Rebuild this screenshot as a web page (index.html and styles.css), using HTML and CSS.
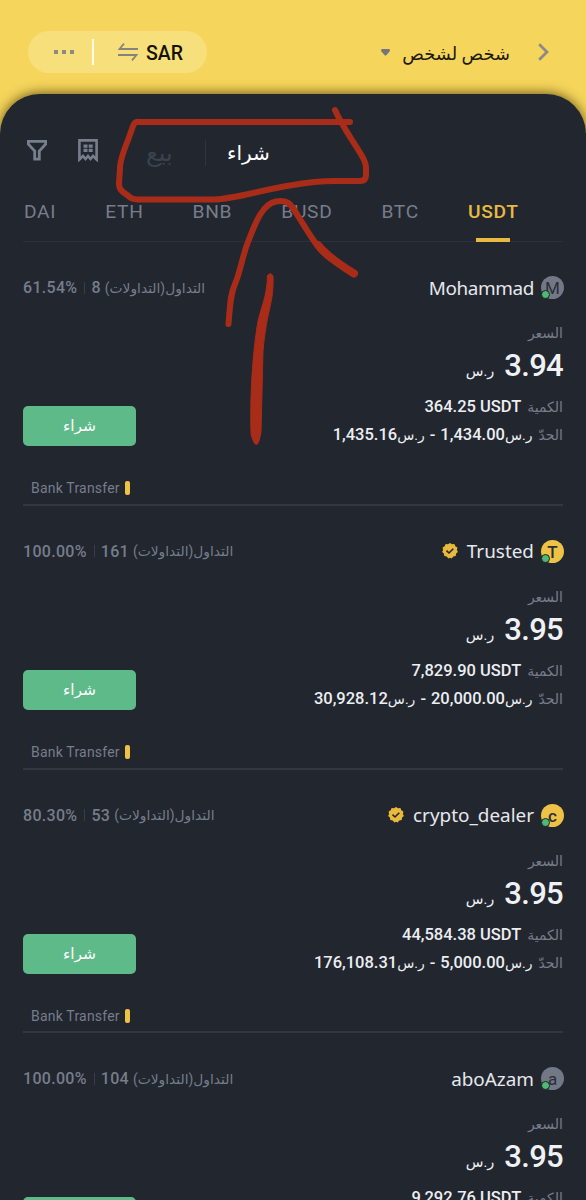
FILE: index.html
```html
<!DOCTYPE html>
<html lang="ar">
<head>
    <meta charset="UTF-8">
    <meta name="viewport" content="width=device-width, initial-scale=1.0">
    <title>شخص لشخص</title>
    <link rel="stylesheet" href="styles.css">
</head>
<body>
    <header class="topbar">
        <div class="pill">
            <svg class="dots" width="20" height="4" viewBox="0 0 20 4"><path d="M0 0h4v4H0zM8 0h4v4H8zM16 0h4v4h-4z" fill="#8d8a80"/></svg>
            <span class="pill-line"></span>
            <svg class="swap" width="20" height="18" viewBox="0 0 20 18" fill="none" stroke="#85837b" stroke-width="1.8"><path d="M20 6H1.500L6 .7M0 12h18.500L14 17.300"/></svg>
            <span class="currency">SAR</span>
        </div>
        <div class="title">
            <svg width="9" height="7" viewBox="0 0 9 7"><path d="M1 0h7q1 0 1 2L5.500 6q-1 1-2 0L0 2q0-2 1-2z" fill="#77737c"/></svg>
            <span class="title-text" dir="rtl">شخص لشخص</span>
            <svg class="chevron" width="11" height="18" viewBox="0 0 11 18" fill="none" stroke="#8d8a85" stroke-width="2.8"><path d="M1.200 1.200L9 9l-7.800 7.800"/></svg>
        </div>
    </header>

    <main class="panel">
        <div class="tools">
            <svg class="filter" width="20" height="21" viewBox="0 0 20 21" fill="none" stroke="#777e8c" stroke-width="2.8"><path d="M1.400 1.400h17.200v2.800L12.300 11v8.100H7.700V11L1.400 4.200z"/></svg>
            <svg class="receipt" width="20" height="23" viewBox="0 0 20 23"><path d="M1.400 20.500V1.400h17.200v19.100L15 17l-2.500 3L10 17l-2.500 3L5 17z" fill="none" stroke="#777e8c" stroke-width="2.6"/><path d="M5.500 5.500h4v3.200h-4zM10.700 5.500h4v3.200h-4zM5.500 9.800h4V13h-4zM10.700 9.800h4V13h-4z" fill="#777e8c"/></svg>
            <span class="side sell">بيع</span>
            <span class="side-line"></span>
            <span class="side buy">شراء</span>
        </div>

        <nav class="tabs">
            <span class="tab">DAI</span>
            <span class="tab">ETH</span>
            <span class="tab">BNB</span>
            <span class="tab">BUSD</span>
            <span class="tab">BTC</span>
            <span class="tab active">USDT</span>
        </nav>

        <section class="offer">
            <div class="offer-head">
                <div class="stats">
                    <span>61.54%</span>
                    <i class="stats-line"></i>
                    <span>8</span>
                    <span class="stats-label" dir="rtl">التداول(التداولات)</span>
                </div>
                <div class="seller">
                    <span class="name wide">Mohammad</span>
                    <span class="avatar">M</span>
                </div>
            </div>
            <div class="label" dir="rtl">السعر</div>
            <div class="price" dir="rtl"><b>3.94</b><span>ر.س</span></div>
            <div class="offer-body">
                <button class="buy-button">شراء</button>
                <div class="details">
                    <div class="line" dir="rtl"><span class="key">الكمية</span><b dir="ltr">364.25 USDT</b></div>
                    <div class="line" dir="rtl"><span class="key">الحدّ</span><span class="range"><i>ر.س</i><b>1,434.00</b><b class="dash">-</b><i>ر.س</i><b>1,435.16</b></span></div>
                </div>
            </div>
            <div class="payment"><span>Bank Transfer</span><i></i></div>
        </section>

        <section class="offer">
            <div class="offer-head">
                <div class="stats">
                    <span>100.00%</span>
                    <i class="stats-line"></i>
                    <span>161</span>
                    <span class="stats-label" dir="rtl">التداول(التداولات)</span>
                </div>
                <div class="seller">
                    <svg class="badge" width="16" height="16" viewBox="0 0 16 16"><path d="M8 0l2 1.300 2.400-.2.9 2.200 2.100 1.200-.5 2.400 1 2.100-1.800 1.600-.4 2.400-2.400.4L9.600 15.400 8 14.700 6.400 15.400 4.700 13.400 2.300 13 1.900 10.600.1 9l1-2.100L.6 4.500l2.100-1.200.9-2.200 2.400.2z" fill="#e9b93c"/><path d="M4.500 7.600L7 10l4.300-4.300" fill="none" stroke="#22262f" stroke-width="1.600"/></svg>
                    <span class="name">Trusted</span>
                    <span class="avatar gold">T</span>
                </div>
            </div>
            <div class="label" dir="rtl">السعر</div>
            <div class="price" dir="rtl"><b>3.95</b><span>ر.س</span></div>
            <div class="offer-body">
                <button class="buy-button">شراء</button>
                <div class="details">
                    <div class="line" dir="rtl"><span class="key">الكمية</span><b dir="ltr">7,829.90 USDT</b></div>
                    <div class="line" dir="rtl"><span class="key">الحدّ</span><span class="range"><i>ر.س</i><b>20,000.00</b><b class="dash">-</b><i>ر.س</i><b>30,928.12</b></span></div>
                </div>
            </div>
            <div class="payment"><span>Bank Transfer</span><i></i></div>
        </section>

        <section class="offer">
            <div class="offer-head">
                <div class="stats">
                    <span>80.30%</span>
                    <i class="stats-line"></i>
                    <span>53</span>
                    <span class="stats-label" dir="rtl">التداول(التداولات)</span>
                </div>
                <div class="seller">
                    <svg class="badge" width="16" height="16" viewBox="0 0 16 16"><path d="M8 0l2 1.300 2.400-.2.9 2.200 2.100 1.200-.5 2.400 1 2.100-1.800 1.600-.4 2.400-2.400.4L9.600 15.400 8 14.700 6.400 15.400 4.700 13.400 2.300 13 1.900 10.600.1 9l1-2.100L.6 4.500l2.100-1.200.9-2.200 2.400.2z" fill="#e9b93c"/><path d="M4.500 7.600L7 10l4.300-4.300" fill="none" stroke="#22262f" stroke-width="1.600"/></svg>
                    <span class="name">crypto_dealer</span>
                    <span class="avatar gold">c</span>
                </div>
            </div>
            <div class="label" dir="rtl">السعر</div>
            <div class="price" dir="rtl"><b>3.95</b><span>ر.س</span></div>
            <div class="offer-body">
                <button class="buy-button">شراء</button>
                <div class="details">
                    <div class="line" dir="rtl"><span class="key">الكمية</span><b dir="ltr">44,584.38 USDT</b></div>
                    <div class="line" dir="rtl"><span class="key">الحدّ</span><span class="range"><i>ر.س</i><b>5,000.00</b><b class="dash">-</b><i>ر.س</i><b>176,108.31</b></span></div>
                </div>
            </div>
            <div class="payment"><span>Bank Transfer</span><i></i></div>
        </section>

        <section class="offer">
            <div class="offer-head">
                <div class="stats">
                    <span>100.00%</span>
                    <i class="stats-line"></i>
                    <span>104</span>
                    <span class="stats-label" dir="rtl">التداول(التداولات)</span>
                </div>
                <div class="seller">
                    <span class="name">aboAzam</span>
                    <span class="avatar">a</span>
                </div>
            </div>
            <div class="label" dir="rtl">السعر</div>
            <div class="price" dir="rtl"><b>3.95</b><span>ر.س</span></div>
            <div class="offer-body">
                <button class="buy-button"></button>
                <div class="details">
                    <div class="line" dir="rtl"><span class="key">الكمية</span><b dir="ltr">9,292.76 USDT</b></div>
                </div>
            </div>
        </section>
    </main>

    <!-- hand-drawn marker over the buy / sell switch -->
    <svg class="marker" width="586" height="460" viewBox="0 0 586 460" fill="none" stroke="#a92c18" stroke-width="6" stroke-linecap="round" stroke-linejoin="round">
        <path d="M350 122H139Q135 121 133 126L128 140Q120 160 120 168L119 184Q119 189 123 192L131 198Q134 199.500 138 199.500H214C235 199 260 190 293 185Q315 181 335 181H360Q366 181 366 175V168Q366 163 362 156C350 136 342 126 335 110"/>
        <path d="M228.500 324C230 307 230 295 235 284C241 270 242 257 248 242C255 224 262 204 276 201.500C289 199 292 206 298 216C310 235 318 250 331 259"/>
        <path d="M318 245C327 256 340 265 354 273.500" stroke-width="8"/>
        <path d="M267.500 276Q270 271 273 276C274 304 267 307 263 351L261 432Q257 456 251 434C250 400 252 360 257 327C260 308 267 299 267.500 276z" fill="#a92c18" stroke-width="1"/>
    </svg>
</body>
</html>
```
FILE: styles.css
```css
* {
    box-sizing: border-box;
}
body {
    margin: 0;
    height: 1200px;
    overflow: hidden;
    position: relative;
    background-color: #f5d55b;
    font-family: Roboto, "DejaVu Sans", sans-serif;
    white-space: nowrap;
}
i {
    font-style: normal;
}
b {
    font-weight: 500;
}
svg {
    flex: none;
}

/* top bar */
.topbar {
    height: 94px;
    padding: 31px 37px 0 28px;
    display: flex;
    justify-content: space-between;
    align-items: flex-start;
}
.pill {
    display: flex;
    align-items: center;
    width: 179px;
    height: 42px;
    padding-left: 26px;
    border-radius: 21px;
    background-color: #f7e07b;
}
.pill-line {
    width: 2px;
    height: 26px;
    margin: 0 24px 0 18px;
    background-color: #fffbe8;
}
.currency {
    margin: 2px 0 0 8px;
    color: #14120a;
    font-size: 19.5px;
    font-weight: 500;
}
.title {
    display: flex;
    align-items: center;
    height: 42px;
}
.title-text {
    width: 108px;
    margin: 2px 0 0 12px;
    font-size: 17.9px;
    color: #1c1a12;
}
.chevron {
    margin-left: 28px;
}

/* dark sheet */
.panel {
    height: 1106px;
    padding: 0 23px;
    overflow: hidden;
    border-radius: 40px 40px 0 0;
    background-color: #22262f;
    box-shadow: 0 -1px 12px rgba(60, 45, 0, 0.75);
}
.tools {
    display: flex;
    align-items: center;
    height: 96px;
    padding: 16px 0 0 4px;
}
.receipt {
    margin-left: 31px;
}
.side {
    margin-top: 5px;
    font-size: 20px;
}
.sell {
    width: 28px;
    margin-left: 48px;
    font-size: 24px;
    color: #3c424d;
}
.side-line {
    width: 1px;
    height: 26px;
    margin: 6px 21px 0 31px;
    background-color: #2f343e;
}
.buy {
    color: #fff;
}
.tabs {
    display: flex;
    gap: 49px;
    height: 52px;
    padding: 10px 0 0 1px;
    border-bottom: 1px solid #2b3039;
    font-size: 19.2px;
    letter-spacing: 0.7px;
    line-height: 24px;
    color: #767d8b;
}
.tab.active {
    position: relative;
    color: #e8ba41;
    font-weight: 500;
}
.tab.active::after {
    content: "";
    position: absolute;
    left: 8px;
    top: 38px;
    width: 34px;
    height: 4px;
    background-color: #e8ba41;
}

/* offers */
.offer {
    height: 263.75px;
    padding-top: 33px;
    border-bottom: 2px solid #323740;
}
.offer-head {
    display: flex;
    justify-content: space-between;
    align-items: center;
    height: 25px;
    margin-right: -1px;
}
.stats {
    display: flex;
    align-items: center;
    font-size: 16px;
    font-weight: 500;
    letter-spacing: 0.3px;
    color: #767d8b;
}
.stats-line {
    width: 1px;
    height: 12px;
    margin: 0 6px 0 7px;
    background-color: #383d48;
}
.stats-label {
    margin-left: 4px;
    font-size: 13.8px;
    font-weight: 400;
    letter-spacing: 0;
}
.seller {
    display: flex;
    align-items: center;
}
.name {
    margin-right: 7px;
    font-family: "Noto Sans", sans-serif;
    font-size: 18.9px;
    color: #e6e8ed;
}
.name.wide {
    letter-spacing: -0.4px;
}
.badge {
    margin-right: 9px;
}
.avatar {
    position: relative;
    width: 23px;
    height: 23px;
    border-radius: 50%;
    background-color: #737887;
    color: #2a2e38;
    font-size: 17px;
    line-height: 24px;
    text-align: center;
}
.avatar.gold {
    background-color: #edc245;
    font-weight: 500;
}
.avatar::after {
    content: "";
    position: absolute;
    left: 0;
    bottom: 0;
    width: 7px;
    height: 7px;
    border: 1.5px solid #17271f;
    border-radius: 50%;
    background-color: #4fb879;
}
.label {
    height: 22px;
    margin-top: 22px;
    font-size: 14px;
    line-height: 22px;
    color: #767d8b;
}
.price {
    display: flex;
    align-items: baseline;
    height: 38px;
    line-height: 44px;
    color: #f0f1f5;
}
.price b {
    font-size: 31px;
    letter-spacing: -0.7px;
}
.price span {
    margin-right: 10px;
    font-size: 14.5px;
}
.offer-body {
    display: flex;
    justify-content: space-between;
    height: 70px;
    margin-top: 11px;
}
.buy-button {
    width: 113px;
    height: 40px;
    margin-top: 13px;
    border: none;
    border-radius: 5px;
    background-color: #5fba89;
    color: #fff;
    font-family: "DejaVu Sans", sans-serif;
    font-size: 15.5px;
}
.line {
    display: flex;
    align-items: baseline;
    height: 28px;
    line-height: 28px;
    font-size: 16.5px;
    color: #eceef2;
}
.key {
    margin-left: 6px;
    font-size: 14px;
    color: #767d8b;
}
.range {
    display: flex;
    align-items: baseline;
}
.range i {
    font-size: 14px;
}
.dash {
    margin: 0 5px;
}
.payment {
    display: flex;
    align-items: center;
    height: 20px;
    margin-top: 15px;
    padding-left: 8px;
    font-size: 14px;
    letter-spacing: 0.2px;
    color: #767d8b;
}
.payment i {
    width: 5px;
    height: 14px;
    margin-left: 5px;
    border-radius: 2px;
    background-color: #edc245;
}

.marker {
    position: absolute;
    left: 0;
    top: 0;
}
```
